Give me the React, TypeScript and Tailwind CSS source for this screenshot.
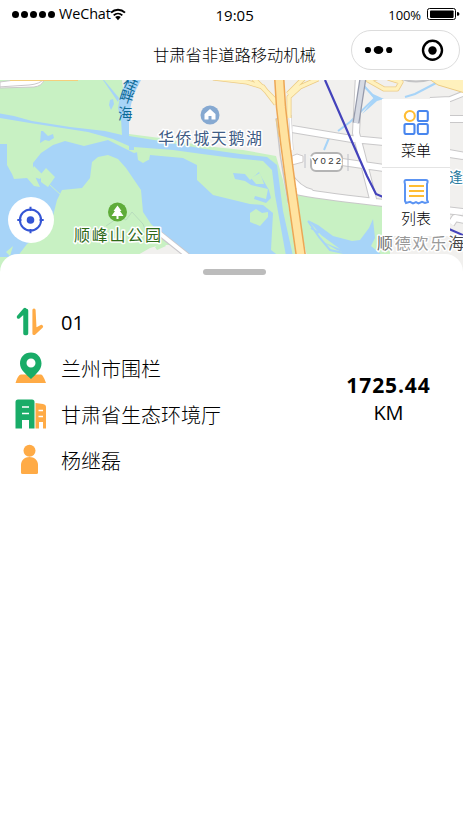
const cjk = "font-['Open_Sans','Noto_Sans_CJK_SC',sans-serif]";

function WifiIcon() {
  return (
    <svg className="mt-px h-[13px] w-[16px]" viewBox="0 0 16 13" fill="none" stroke="#000">
      <path d="M1 4.6C5 .8 11 .8 15 4.6" strokeWidth="2" />
      <path d="M3.7 7.4C6.2 5 9.8 5 12.3 7.4" strokeWidth="1.8" />
      <path d="M5.2 9.1C6.8 7.7 9.2 7.7 10.8 9.1L8 12.2Z" fill="#000" stroke="none" />
    </svg>
  );
}

function StatusBar() {
  return (
    <div className="grid h-7 grid-cols-[216px_1fr_auto] items-center pr-[3px] pl-[12px]">
      <div className="flex items-center">
        <div className="flex gap-[2px]">
          {[0, 1, 2, 3, 4].map((i) => (
            <span key={i} className="h-[7px] w-[7px] rounded-full bg-black" />
          ))}
        </div>
        <span className="ml-[4px] w-[51px] text-[14.4px] leading-5 tracking-[-0.1px]">WeChat</span>
        <WifiIcon />
      </div>
      <span className="-ml-[12.5px] pt-px text-[15px] leading-5">19:05</span>
      <div className="flex items-center gap-[5px]">
        <span className="pt-[2px] text-[13px] leading-5 tracking-[-0.1px]">100%</span>
        <svg className="-mt-px h-[13px] w-[34px]" viewBox="0 0 34 13">
          <rect x="1.5" y="1.5" width="28" height="11" rx="2" fill="none" stroke="#000" />
          <rect x="4" y="3.5" width="23.6" height="7.4" rx=".8" />
          <path d="M31 5q2.5 0 2.5 1.9t-2.5 1.9z" />
        </svg>
      </div>
    </div>
  );
}

function NavBar() {
  return (
    <div className="grid h-[52px] grid-cols-[153px_1fr_112px] items-start">
      <h1 className="col-start-2 pt-[15px] text-[16.3px] leading-6 font-light whitespace-nowrap">甘肃省非道路移动机械</h1>
      <div className="mt-[2px] flex h-[40px] w-[109px] items-center rounded-full border border-[#dcdcdc]">
        <svg className="h-[38px] w-[107px]" viewBox="352 31 107 38">
          <circle cx="368" cy="50" r="3.1" />
          <ellipse cx="378.5" cy="50" rx="4.8" ry="4" />
          <circle cx="389.2" cy="50" r="3.1" />
          <circle cx="432.5" cy="50.3" r="9.5" fill="none" stroke="#000" strokeWidth="2.4" />
          <circle cx="432.5" cy="50.5" r="4.2" />
        </svg>
      </div>
    </div>
  );
}

function MapCanvas() {
  return (
    <svg className="block h-[194px] w-[463px]" viewBox="0 80 463 194" fill="none">
      <defs>
        <linearGradient id="coastLabel" x1="377" x2="463" y1="0" y2="0" gradientUnits="userSpaceOnUse">
          <stop offset="0" stopColor="#555" />
          <stop offset=".25" stopColor="#999" />
          <stop offset=".75" stopColor="#999" />
          <stop offset=".88" stopColor="#444" />
        </linearGradient>
      </defs>
      <path fill="#f1f0ee" d="M0 80h463v194H0z" />
      <path fill="#c8f1c3" d="M0 80H122L129 134L160 138L205 146L243 150L276 156L283 180L302 274H0Z" />
      <path fill="#f1f0ee" d="M136 256L150 248L160 245L175 245L190 256Z" />
      <path fill="#fff" stroke="#cbc8cb" d="M-2 87L29 85Q40 84 44 79H22L0 82V88L34 87Q42 86 44 80" />
      <path stroke="#f5cf7c" strokeWidth="2" d="M10 80H78" />
      <g fill="#a7d4f8">
        <path d="M0 113.500L14 116L32 121L70 127L105 131L122 135L121 119L118 108L120 97L126 80H141L133 96L129 114V136L160 141L205 149L240 154L267 157L277 165L283 211L293 256H286L275 195L272 170L263 161L233 158L202 154L173 150L134 147L134 150L129 150V146L113 139L88 132L30 123L0 118Z" />
        <path d="M104 80L119 98L118 102L103 80ZM110 100L113 99L114 104L111 110L109 105ZM41 131H43L48 136L53 134L54 138L49 141L45 140L40 143Z" />
        <path d="M0 144H7V165L12 174L14 179L27 178L34 186L40 187L33 172V163L41 153L53 145L65 141L84 146L108 140L126 149L134 153L138 152L140 161L149 160L150 155L183 158L197 165L197 180L213 195L250 204L263 205L273 213L271 250L280 257H188L178 247L164 236L151 224L143 212L141 190L126 168L118 159L108 155L98 157L92 162L90 178L82 188L62 190L57 200L50 228L27 244L17 257H0Z" />
        <path d="M233 173L245 174L250 180L259 172L262 178L269 190L271 198L266 203L254 199L255 196L266 199L268 189L251 185L245 181L235 179Z" />
      </g>
      <path fill="#c8f1c3" d="M41 174L46 168L55 177L48 187L41 182ZM137 152L150 153L148 160L143 163L138 160ZM250 213L256 209L262 213L268 212V217L260 226L250 222ZM32 170L34 166L43 175L40 179L33 177ZM6 252L13 246L10 256ZM155 247L163 242L166 246L157 250ZM251 178L260 173L264 184L256 184Z" />
      <path stroke="#c8f1c3" d="M50 185L61 195" />
      <path stroke="#b8ddbd" d="M106 226L119 217L126 220L132 212L143 224L150 242" />
      <path stroke="#c9c7cb" strokeWidth="6" d="M160 234L188 256" />
      <path stroke="#fff" strokeWidth="4" d="M158 232L188 256" />

      <path fill="#c8f1c3" d="M298 195L334 198L390 206V256H307L298 218Z" />
      <path fill="#a7d4f8" d="M308 220L318 225L333 236L352 241L360 240L369 228L373 219L375 238L371 246L382 255H350L337 250L323 242L340 249L321 235Z" />
      <path stroke="#a7d4f8" strokeWidth="2" d="M308 221L319 237L330 250L348 254M311 228L319 233M338 131L350 122L375 98L362 84M405 97L415 94L438 82M324 150L329 138" />
      <path fill="#a7d4f8" d="M363 84L373 94L384 99L377 101L368 109L362 114L374 99Z" />
      <g strokeLinejoin="round">
        <path stroke="#c9c8c9" strokeWidth="8" d="M292 129L352 139L384 142M384 144L463 156M296 191Q315 195 375 202L463 212M359 75L356 133L361 152L374 203M342 162L384 168M443 119H465M443 152L465 156M451 224L455 218L465 220M288 174Q298 190 312 193" />
        <path stroke="#fff" strokeWidth="6" d="M292 129L352 139L384 142M384 144L463 156M296 191Q315 195 375 202L463 212M359 75L356 133L361 152L374 203M342 162L384 168M443 119H465M443 152L465 156M451 224L455 218L465 220M288 174Q298 190 312 193" />
      </g>
      <path stroke="#c9c8c9" strokeWidth="6" d="M430 100L450 99L465 93" />
      <path stroke="#fff" strokeWidth="4" d="M430 100L450 99L465 93" />
      <path fill="#fff1bd" stroke="#eccb83" d="M423 75H465V93L438 85Z" />
      <path fill="#fff" stroke="#cfcaca" d="M292 156L297 154L303 156V162L292 165Z" />
      <path stroke="#bec0c8" d="M305 154V168M348 154V171" />

      <g strokeLinejoin="round">
        <path stroke="#edcc87" strokeWidth="5" d="M213 78L247 82L263 87L276 104M253 78L278 103M380 77L368 80L384 89H397L401 82L388 78" />
        <path stroke="#fff1bd" strokeWidth="3.500" d="M213 78L247 82L263 87L276 104M253 78L278 103M380 77L368 80L384 89H397L401 82L388 78" />
        <path stroke="#c8c6c8" strokeWidth="3" d="M277 118L281 155L289 203M290 115L292 150" />
        <path stroke="#fff" strokeWidth="2" d="M278 118L282 155L290 203M290 115L292 150" />
        <path stroke="#eccb83" strokeWidth="5" d="M318 79L300 87L289 97L289 118M304 78L288 94" />
        <path stroke="#fff1bd" strokeWidth="3.500" d="M318 79L300 87L289 97L289 118M304 78L288 94" />
        <path stroke="#eccb83" d="M276 119L279 137" />
        <path stroke="#eda755" strokeWidth="10.500" d="M279 75L281 107L285 142L291 187L301 257" />
        <path stroke="#ffe3a0" strokeWidth="7.500" d="M279 75L281 107L285 142L291 187L301 257" />
      </g>
      <path stroke="#959aab" strokeWidth="7" d="M363 78L356 123" />
      <path stroke="#d6dae3" strokeWidth="4.5" d="M363 78L356 123" />
      <path stroke="#4443bb" strokeWidth="2.2" d="M325 80L367 176L376 194L390 200M449 229L465 236" />
      <path stroke="#c3c3c5" strokeWidth="2" d="M402 79Q415 84 432 79" />
      <rect x="311" y="153" width="31" height="18" rx="5" fill="#fff" stroke="#b4b4b4" strokeWidth="2" />
      <text x="312" y="164" fontSize="9.5" fill="#333" stroke="#fff" strokeWidth="3" paintOrder="stroke" textLength="29" className="font-['Liberation_Sans',sans-serif]">Y022</text>

      <circle cx="210" cy="115" r="9.5" fill="#86a9d1" />
      <path fill="#fff" d="M210 109L204.500 114V119.500H208.500V116H211.500V119.500H215.500V114Z" />
      <circle cx="117.5" cy="212" r="9.5" fill="#5fac3a" />
      <path fill="#fff" d="M117.5 205.5L113.5 211H115L111.5 216H116.5V219H118.5V216H123.5L120 211H121.5Z" />
      <g className="font-['Noto_Sans_CJK_SC',sans-serif]" stroke="#fff" strokeWidth="3" strokeLinejoin="round" paintOrder="stroke">
        <text x="158" y="143.5" fontSize="16" fill="#405c85" textLength="104">华侨城天鹅湖</text>
        <text x="74" y="240.5" fontSize="16" fill="#2e6a18" textLength="87">顺峰山公园</text>
        <text x="377" y="248.5" fontSize="16" fill="url(#coastLabel)" textLength="87">顺德欢乐海</text>
        <text x="449" y="182" fontSize="14" fill="#287ba0">逢</text>
      </g>
      <g className="font-['Noto_Sans_CJK_SC',sans-serif]" fontSize="14.5" fill="#0d6a96">
        <text transform="translate(130.500 84) rotate(24)" x="-7" y="5">桂</text>
        <text transform="translate(126.500 97) rotate(18)" x="-7" y="5">畔</text>
        <text x="118" y="118.500">海</text>
      </g>
    </svg>
  );
}

function MapTools() {
  return (
    <div className="absolute top-[19px] right-[13px] w-[68px] bg-white">
      <button className="flex h-[69px] w-full flex-col items-center border-b border-[#e4e4e4] pt-[10px]">
        <svg className="h-[26px] w-[26px]" viewBox="0 0 26 26" fill="none" stroke="#4886ee" strokeWidth="2.1">
          <circle cx="6.8" cy="7" r="5" stroke="#ffbd33" />
          <rect x="14.800" y="2" width="10" height="10" rx="1.5" />
          <rect x="1.500" y="15" width="10" height="10" rx="1.5" />
          <rect x="14.800" y="15" width="10" height="10" rx="1.5" />
        </svg>
        <span className="mt-[5px] text-[15px] leading-5 font-light">菜单</span>
      </button>
      <button className="flex h-[68px] w-full flex-col items-center pt-[10px]">
        <svg className="h-[27px] w-[26px]" viewBox="0 0 26 27" fill="none" strokeWidth="2">
          <path stroke="#5b94f3" d="M3 2H23Q25 2 24.500 4.500L24 6V22L25 24L22 25L19 23.800L15.500 25.300L13 24L10 25.300L7 23.800L3 25L2 23V6L1.500 4Q1.500 2 3 2Z" />
          <path stroke="#ffbd33" d="M6 8H21M6 13H21M6 18H21" />
        </svg>
        <span className="mt-[3px] text-[15px] leading-5 font-light">列表</span>
      </button>
    </div>
  );
}

function RouteIcon() {
  return (
    <svg className="h-8 w-8" viewBox="0 0 32 32" fill="none" strokeWidth="4" strokeLinecap="round" strokeLinejoin="round">
      <path fill="#19ac68" stroke="#19ac68" strokeWidth="3.5" d="M3.500 11L10 3.500V27.500H11.500V4.500L8 7Z" />
      <path fill="#ffab46" stroke="#ffab46" strokeWidth="3.2" d="M19 4V27.500L26.500 20.500L20 24Z" />
    </svg>
  );
}

function FenceIcon() {
  return (
    <svg className="h-8 w-8" viewBox="0 0 32 32">
      <path fill="#ffab46" d="M6 22.5H26Q28 22.5 31 31H.5Q3 22.5 6 22.5Z" />
      <path fill="#19ac68" fillRule="evenodd" d="M16 .5C9.300 .5 5 5.300 5 11.500C5 18 11 22 16 27C21 22 26.500 18 26.500 11.500C26.500 5.300 22 .5 16 .5ZM16 6.5A4.500 4.500 0 1 1 16 15.500A4.500 4.500 0 0 1 16 6.5Z" />
    </svg>
  );
}

function OfficeIcon() {
  return (
    <svg className="h-8 w-8" viewBox="0 0 32 32">
      <path fill="#19ac68" d="M3 1.5H17Q19.5 1.5 19.5 4V30.5H14V22H7V30.5H.5V4Q.5 1.5 3 1.5Z" />
      <path fill="#ffab46" d="M20.500 5L28 6Q31 6.5 31 9V30.500H28V24H24V30.500H20.500Z" />
      <path stroke="#fff" strokeWidth="1.7" d="M7 9H14M7 15.500H14M23.500 12.500H28M23.500 18.500H28" />
    </svg>
  );
}

function PersonIcon() {
  return (
    <svg className="h-8 w-8" viewBox="0 0 32 32" fill="#ffab46">
      <circle cx="14.5" cy="6.700" r="6" />
      <path d="M14.5 13C19.500 13 23 16.500 23 21V28.500Q23 30 21.500 30H7.500Q6 30 6 28.500V21C6 16.500 9.500 13 14.5 13Z" />
    </svg>
  );
}

const rows = [
  { icon: <RouteIcon />, label: "01", style: "pt-[2px] font-normal" },
  { icon: <FenceIcon />, label: "兰州市围栏", style: "pt-[4px] font-light" },
  { icon: <OfficeIcon />, label: "甘肃省生态环境厅", style: "pt-[4px] font-light" },
  { icon: <PersonIcon />, label: "杨继磊", style: "pt-[4px] font-light" },
];

export default function App() {
  return (
    <main className={`flex h-[832px] w-[463px] flex-col overflow-hidden bg-white text-black ${cjk}`}>
      <StatusBar />
      <NavBar />
      <section className="relative h-[194px] shrink-0 overflow-hidden">
        <MapCanvas />
        <MapTools />
        <button className="absolute top-[117px] left-[8px] flex h-[46px] w-[46px] items-center justify-center rounded-full bg-white">
          <svg className="h-7 w-7" viewBox="0 0 28 28" fill="none" stroke="#3455d5" strokeWidth="2">
            <circle cx="13.5" cy="14" r="10.600" />
            <path d="M13.5 .8V5M13.5 23V27.2M.3 14H4.500M22.500 14H26.700" />
            <circle cx="13.5" cy="14" r="3.800" fill="#3455d5" stroke="none" />
          </svg>
        </button>
      </section>
      <section className="relative -mt-5 grow rounded-t-[18px] bg-white pt-[15px]">
        <div className="ml-[203px] h-[6px] w-[63px] rounded-full bg-[#bcbcbc]" />
        <div className="mt-[24px] grid grid-cols-[314px_149px] items-center">
          <ul>
            {rows.map((row) => (
              <li key={row.label} className="flex h-[46px] items-center gap-[14px] pl-[15px]">
                {row.icon}
                <span className={`text-[20px] leading-7 ${row.style}`}>{row.label}</span>
              </li>
            ))}
          </ul>
          <div className="mt-[16px] flex flex-col items-center">
            <strong className="text-[21px] leading-[27px] font-bold tracking-[0.9px]">1725.44</strong>
            <span className="text-[20px] leading-[27px]">KM</span>
          </div>
        </div>
      </section>
    </main>
  );
}
